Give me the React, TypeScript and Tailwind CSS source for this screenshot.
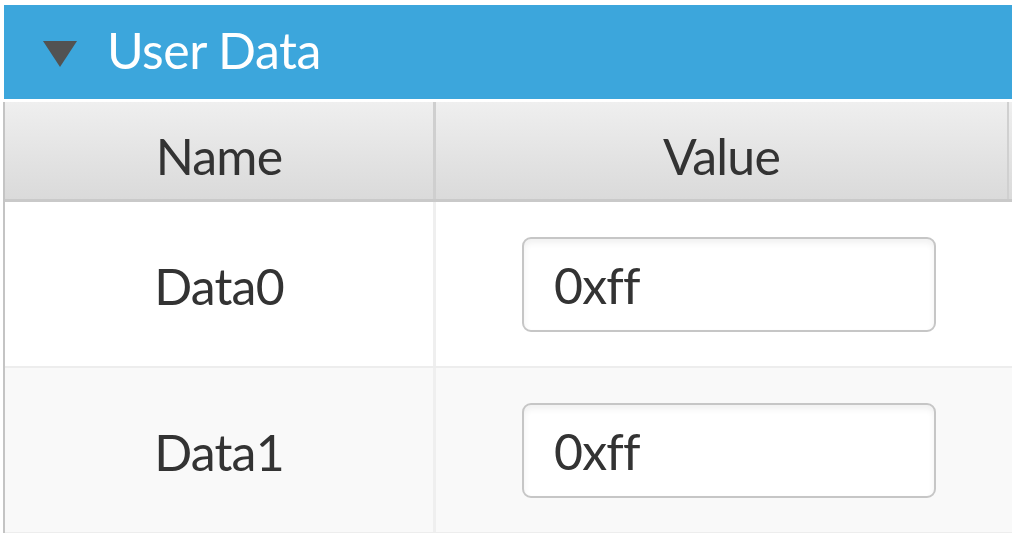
import React from "react";

const rows = [
  { name: "Data0", value: "0xff" },
  { name: "Data1", value: "0xff" },
];

export default function App() {
  return (
    <div
      className="w-[1012px] h-[533px] overflow-hidden bg-white pl-[4px] pt-[5px] text-[#333333] [font-variant-ligatures:none]"
      style={{ fontFamily: "Lato, 'Open Sans', sans-serif" }}
    >
      {/* Title bar */}
      <div className="h-[94px] bg-[#3ca6dc] flex items-center">
        <svg width="36" height="28" viewBox="0 0 36 28" className="ml-[38px] mt-[3px]">
          <polygon points="1,1 35,1 18,27" fill="#525252" />
        </svg>
        <span className="ml-[29px] text-[50px] leading-none text-white tracking-[-0.5px] mb-[4px]">
          User Data
        </span>
      </div>

      {/* Table */}
      <div className="mt-[3px] border-l-[2px] border-[#c4c4c4] -ml-[1px]">
        <div className="flex h-[100px] border-b-[3px] border-[#c9c9c9] bg-gradient-to-b from-[#efefef] to-[#dadada]">
          <div className="w-[431px] flex items-center justify-center border-r-[3px] border-[#cfcfcf] text-[50px] tracking-[-0.8px] pt-[12px]">
            Name
          </div>
          <div className="w-[573px] flex items-center justify-center border-r-[2px] border-[#d0d0d0] text-[50px] tracking-[-0.8px] pt-[12px]">
            Value
          </div>
        </div>

        {rows.map((r, i) => (
          <div
            key={r.name}
            className={`flex h-[166px] border-b-[2px] border-[#ededed] ${i % 2 === 0 ? "bg-white" : "bg-[#f9f9f9]"}`}
          >
            <div className="w-[431px] flex items-center justify-center border-r-[3px] border-[#efefef] text-[50px] tracking-[-0.8px] pt-[4px]">
              {r.name}
            </div>
            <div className="flex-1 flex items-center pl-[86px]">
              <div className="w-[414px] h-[95px] rounded-[9px] border-[2px] border-[#c6c6c6] bg-white shadow-[inset_0_4px_6px_rgba(0,0,0,0.06)] flex items-center pl-[30px] text-[50px] tracking-[-0.8px] pt-[2px]">
                {r.value}
              </div>
            </div>
          </div>
        ))}
      </div>
    </div>
  );
}
